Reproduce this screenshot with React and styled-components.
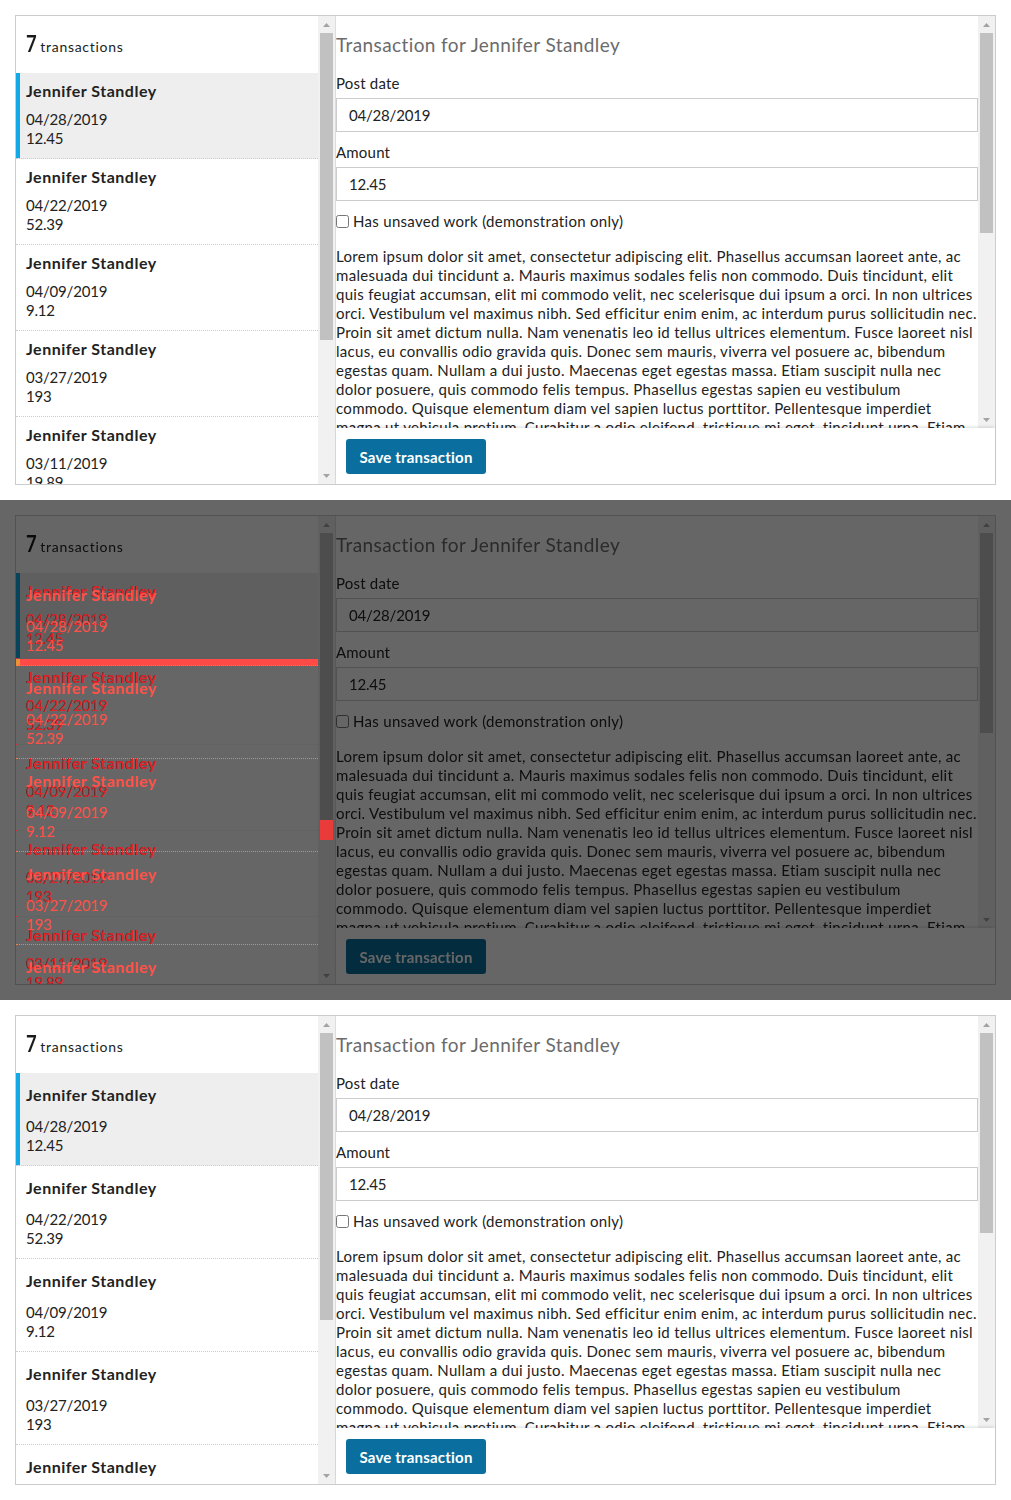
import React from 'react';
import styled, { createGlobalStyle, css } from 'styled-components';

const GlobalStyle = createGlobalStyle`
  html, body { margin: 0; padding: 0; background: #fff; }
  body { font-family: Lato, "Noto Sans", sans-serif; color: #222; }
  * { box-sizing: border-box; }
`;

const FONT = `Lato, "Noto Sans", sans-serif`;

const tones = {
  normal: { text: '#222', line: '#cccccc', selBg: '#eeeeee', bar: '#12a9e6' },
  diffA: { text: '#e3262c', line: '#e3262c', selBg: 'transparent', bar: null },
  diffB: { text: '#ff5148', line: '#ff7a3c', selBg: 'transparent', bar: null },
};

const transactions = [
  { name: 'Jennifer Standley', date: '04/28/2019', amount: '12.45' },
  { name: 'Jennifer Standley', date: '04/22/2019', amount: '52.39' },
  { name: 'Jennifer Standley', date: '04/09/2019', amount: '9.12' },
  { name: 'Jennifer Standley', date: '03/27/2019', amount: '193' },
  { name: 'Jennifer Standley', date: '03/11/2019', amount: '19.89' },
  { name: 'Jennifer Standley', date: '02/26/2019', amount: '45.10' },
  { name: 'Jennifer Standley', date: '02/14/2019', amount: '8.75' },
];

const LOREM_LINES = [
  'Lorem ipsum dolor sit amet, consectetur adipiscing elit. Phasellus accumsan laoreet ante, ac',
  'malesuada dui tincidunt a. Mauris maximus sodales felis non commodo. Duis tincidunt, elit',
  'quis feugiat accumsan, elit mi commodo velit, nec scelerisque dui ipsum a orci. In non ultrices',
  'orci. Vestibulum vel maximus nibh. Sed efficitur enim enim, ac interdum purus sollicitudin nec.',
  'Proin sit amet dictum nulla. Nam venenatis leo id tellus ultrices elementum. Fusce laoreet nisl',
  'lacus, eu convallis odio gravida quis. Donec sem mauris, viverra vel posuere ac, bibendum',
  'egestas quam. Nullam a dui justo. Maecenas eget egestas massa. Etiam suscipit nulla nec',
  'dolor posuere, quis commodo felis tempus. Phasellus egestas sapien eu vestibulum',
  'commodo. Quisque elementum diam vel sapien luctus porttitor. Pellentesque imperdiet',
  'magna ut vehicula pretium. Curabitur a odio eleifend, tristique mi eget, tincidunt urna. Etiam',
  'vitae lectus non nisi feugiat dictum. Integer at sem quis libero varius pulvinar sed a nunc.',
  'Aliquam erat volutpat. Sed vel orci id lorem luctus viverra, vitae fringilla magna.',
];

/* ---------- layout ---------- */

const Strip = styled.section`
  height: 500px;
  padding: 15px;
  background: ${(p) => (p.$dark ? '#666666' : '#ffffff')};
`;

const Frame = styled.div`
  position: relative;
  height: 470px;
`;

const Panel = styled.div`
  display: flex;
  height: 470px;
  border: 1px solid #cccccc;
  background: #fff;
  ${(p) => p.$dim && css`filter: brightness(0.4);`}
`;

const ListPane = styled.div`
  width: 320px;
  flex: none;
  display: flex;
  border-right: 1px solid #dddddd;
`;

const ListViewport = styled.div`
  width: 302px;
  flex: none;
  overflow: hidden;
`;

const ListHeader = styled.div`
  height: 57px;
  padding: 12px 10px 0;
  display: flex;
  align-items: baseline;
  gap: 4px;
  visibility: ${(p) => (p.$hidden ? 'hidden' : 'visible')};
`;

const Count = styled.span`
  font-size: 23px;
  line-height: 30px;
  font-weight: 700;
  transform: scaleX(0.8);
  transform-origin: left center;
  margin-right: -3px;
  color: #1a1a1a;
`;

const CountLabel = styled.span`
  font-size: 14px;
  letter-spacing: 0.7px;
`;

const List = styled.ul`
  list-style: none;
  margin: 0;
  padding: 0;
`;

const Item = styled.li`
  padding: ${(p) => (p.$roomy ? '12px' : '8px')} 10px 10px;
  border-bottom: 1px dotted ${(p) => tones[p.$tone].line};
  color: ${(p) => tones[p.$tone].text};
  background: ${(p) => (p.$selected ? tones[p.$tone].selBg : 'transparent')};
  box-shadow: ${(p) =>
    p.$selected && tones[p.$tone].bar ? `inset 4px 0 0 ${tones[p.$tone].bar}` : 'none'};
`;

const Name = styled.div`
  font-size: 16px;
  line-height: 20px;
  font-weight: 700;
  letter-spacing: 0.5px;
  margin-bottom: ${(p) => (p.$roomy ? '12px' : '9px')};
`;

const Meta = styled.div`
  font-size: 15px;
  line-height: 19px;
  letter-spacing: -0.2px;
`;

/* ---------- fake scrollbars ---------- */

const ScrollTrack = styled.div`
  width: 17px;
  flex: none;
  display: flex;
  flex-direction: column;
  background: #f1f1f1;
`;

const ScrollArrow = styled.div`
  height: 17px;
  flex: none;
  display: flex;
  align-items: center;
  justify-content: center;
`;

const ScrollRail = styled.div`
  flex: 1;
  padding: 0 2px;
`;

const ScrollThumb = styled.div`
  height: ${(p) => p.$size}px;
  background: #c1c1c1;
`;

const Arrow = ({ up }) => (
  <svg width="7" height="4" viewBox="0 0 7 4">
    <path d={up ? 'M0 4 L3.5 0 L7 4 Z' : 'M0 0 L3.5 4 L7 0 Z'} fill="#a3a3a3" />
  </svg>
);

const Scrollbar = ({ thumb }) => (
  <ScrollTrack>
    <ScrollArrow>
      <Arrow up />
    </ScrollArrow>
    <ScrollRail>
      <ScrollThumb $size={thumb} />
    </ScrollRail>
    <ScrollArrow>
      <Arrow />
    </ScrollArrow>
  </ScrollTrack>
);

/* ---------- detail ---------- */

const DetailPane = styled.div`
  flex: 1;
  min-width: 0;
  display: flex;
  flex-direction: column;
`;

const DetailScroll = styled.div`
  flex: 1;
  min-height: 0;
  display: flex;
`;

const Detail = styled.div`
  flex: 1;
  min-width: 0;
  overflow: hidden;
`;

const Title = styled.h2`
  margin: 16px 0;
  font-size: 19px;
  line-height: 26px;
  font-weight: 400;
  letter-spacing: 0.4px;
  color: #6b6b6b;
`;

const Label = styled.label`
  display: block;
  font-size: 15px;
  line-height: 19px;
  letter-spacing: 0.2px;
  margin-bottom: 5px;
`;

const TextInput = styled.input`
  display: block;
  width: 100%;
  height: 34px;
  margin: 0 0 11px;
  padding: 0 12px;
  border: 1px solid #cccccc;
  border-radius: 0;
  outline: none;
  font-family: ${FONT};
  font-size: 15px;
  letter-spacing: -0.2px;
  color: #222;
  background: #fff;
`;

const CheckRow = styled.label`
  display: flex;
  align-items: center;
  gap: 4px;
  font-size: 15px;
  line-height: 19px;
  letter-spacing: 0.3px;
`;

const Check = styled.input`
  margin: 0;
  width: 13px;
  height: 13px;
`;

const Body = styled.p`
  margin: 16px 0 0;
  font-size: 15px;
  line-height: 19px;
  letter-spacing: 0.3px;
`;

const BodyLine = styled.span`
  display: block;
  white-space: nowrap;
`;

const Footer = styled.div`
  position: relative;
  height: 56px;
  flex: none;
  padding: 11px 10px;
  background: #fff;
  box-shadow: 0 -2px 3px -1px rgba(0, 0, 0, 0.14);
`;

const SaveButton = styled.button`
  width: 140px;
  height: 35px;
  padding: 0;
  border: 0;
  border-radius: 3px;
  background: #0a6f9e;
  color: #fff;
  font-family: ${FONT};
  font-size: 15px;
  font-weight: 700;
  letter-spacing: 0.2px;
`;

/* ---------- diff overlay ---------- */

const DiffOverlay = styled.div`
  position: absolute;
  top: 1px;
  left: 1px;
  width: 319px;
  height: 468px;
  overflow: hidden;
  pointer-events: none;
`;

const DiffLayer = styled.div`
  position: absolute;
  top: 0;
  left: 0;
  width: 302px;
`;

const DiffBar = styled.div`
  position: absolute;
  left: 0;
  top: 143px;
  width: 302px;
  height: 7px;
  background: #ff4a46;
  box-shadow: inset 4px 0 0 #e8923a;
`;

const DiffThumb = styled.div`
  position: absolute;
  left: 304px;
  top: 304px;
  width: 13px;
  height: 20px;
  background: #ea3b3b;
`;

/* ---------- composed ---------- */

const TxItems = ({ roomy, tone }) => (
  <List>
    {transactions.map((t, i) => (
      <Item key={i} $roomy={roomy} $tone={tone} $selected={i === 0}>
        <Name $roomy={roomy}>{t.name}</Name>
        <Meta>{t.date}</Meta>
        <Meta>{t.amount}</Meta>
      </Item>
    ))}
  </List>
);

const TxList = ({ roomy, tone = 'normal', hideHeader }) => (
  <>
    <ListHeader $hidden={hideHeader}>
      <Count>7</Count>
      <CountLabel>transactions</CountLabel>
    </ListHeader>
    <TxItems roomy={roomy} tone={tone} />
  </>
);

const TransactionPanel = ({ roomy, dim }) => (
  <Panel $dim={dim}>
    <ListPane>
      <ListViewport>
        <TxList roomy={roomy} />
      </ListViewport>
      <Scrollbar thumb={roomy ? 287 : 307} />
    </ListPane>
    <DetailPane>
      <DetailScroll>
        <Detail>
          <Title>Transaction for Jennifer Standley</Title>
          <Label>Post date</Label>
          <TextInput defaultValue="04/28/2019" />
          <Label>Amount</Label>
          <TextInput defaultValue="12.45" />
          <CheckRow>
            <Check type="checkbox" />
            Has unsaved work (demonstration only)
          </CheckRow>
          <Body>
            {LOREM_LINES.map((line, i) => (
              <BodyLine key={i}>{line}</BodyLine>
            ))}
          </Body>
        </Detail>
        <Scrollbar thumb={200} />
      </DetailScroll>
      <Footer>
        <SaveButton>Save transaction</SaveButton>
      </Footer>
    </DetailPane>
  </Panel>
);

export default function App() {
  return (
    <>
      <GlobalStyle />
      <Strip>
        <Frame>
          <TransactionPanel />
        </Frame>
      </Strip>
      <Strip $dark>
        <Frame>
          <TransactionPanel dim />
          <DiffOverlay>
            <DiffBar />
            <DiffLayer>
              <TxList tone="diffA" hideHeader />
            </DiffLayer>
            <DiffLayer>
              <TxList roomy tone="diffB" hideHeader />
            </DiffLayer>
            <DiffThumb />
          </DiffOverlay>
        </Frame>
      </Strip>
      <Strip>
        <Frame>
          <TransactionPanel roomy />
        </Frame>
      </Strip>
    </>
  );
}
